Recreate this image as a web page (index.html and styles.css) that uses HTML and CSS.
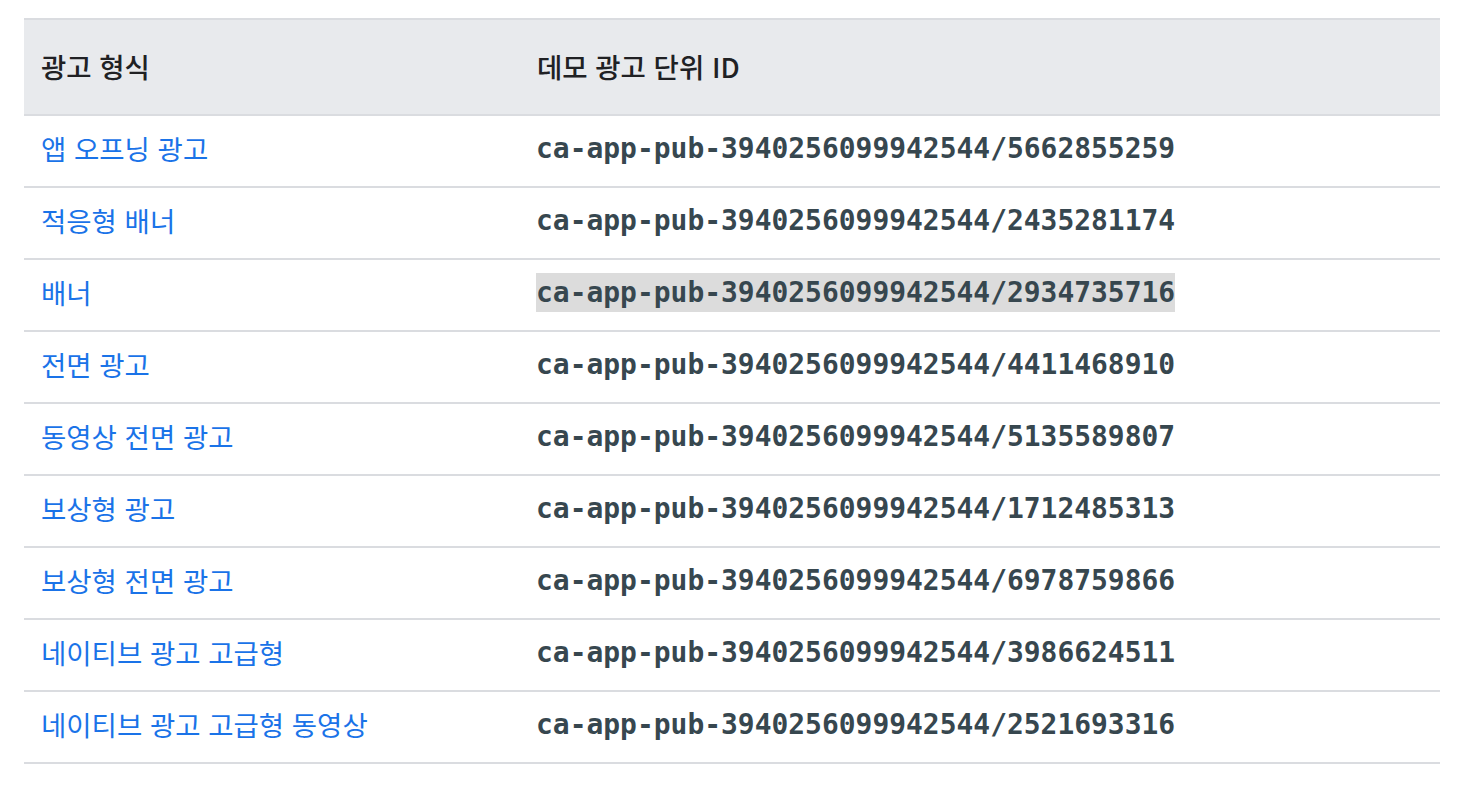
FILE: index.html
```html
<!DOCTYPE html>
<html lang="ko">
<head>
	<meta charset="UTF-8">
	<title>데모 광고 단위</title>
	<link rel="stylesheet" href="styles.css">
</head>
<body>
	<!-- 데모 광고 단위 표 -->
	<div class="wrap">
		<table class="ad-table">
			<thead>
				<tr>
					<th class="col-format">광고 형식</th>
					<th>데모 광고 단위 ID</th>
				</tr>
			</thead>
			<tbody>
				<tr>
					<td><a href="#">앱 오프닝 광고</a></td>
					<td><code>ca-app-pub-3940256099942544/5662855259</code></td>
				</tr>
				<tr>
					<td><a href="#">적응형 배너</a></td>
					<td><code>ca-app-pub-3940256099942544/2435281174</code></td>
				</tr>
				<tr>
					<td><a href="#">배너</a></td>
					<td><code class="selected">ca-app-pub-3940256099942544/2934735716</code></td>
				</tr>
				<tr>
					<td><a href="#">전면 광고</a></td>
					<td><code>ca-app-pub-3940256099942544/4411468910</code></td>
				</tr>
				<tr>
					<td><a href="#">동영상 전면 광고</a></td>
					<td><code>ca-app-pub-3940256099942544/5135589807</code></td>
				</tr>
				<tr>
					<td><a href="#">보상형 광고</a></td>
					<td><code>ca-app-pub-3940256099942544/1712485313</code></td>
				</tr>
				<tr>
					<td><a href="#">보상형 전면 광고</a></td>
					<td><code>ca-app-pub-3940256099942544/6978759866</code></td>
				</tr>
				<tr>
					<td><a href="#">네이티브 광고 고급형</a></td>
					<td><code>ca-app-pub-3940256099942544/3986624511</code></td>
				</tr>
				<tr>
					<td><a href="#">네이티브 광고 고급형 동영상</a></td>
					<td><code>ca-app-pub-3940256099942544/2521693316</code></td>
				</tr>
			</tbody>
		</table>
	</div>
</body>
</html>
```

FILE: styles.css
```css
*{
	padding: 0;
	margin: 0;
	box-sizing: border-box;
}
body{
	background: #fff;
	font-family: "Noto Sans CJK KR", "Noto Sans", sans-serif;
	font-size: 27.5px;
}
/*主容器*/
.wrap{
	padding: 18px 32px 0 24px;
}
.ad-table{
	width: 1416px;
	border-collapse: collapse;
	border-top: 2px solid #dadce0;
}
.ad-table th{
	height: 96px;
	background: #e8eaed;
	border-bottom: 2px solid #dadce0;
	color: #202124;
	font-weight: 500;
	text-align: left;
	padding: 0 17px 2px;
}
.ad-table .col-format{
	width: 496px;
}
.ad-table td{
	height: 72px;
	border-bottom: 2px solid #dadce0;
	padding: 0 17px 6px 17px;
	vertical-align: middle;
}
.ad-table td + td{
	padding-left: 16px;
}
.ad-table a{
	color: #1a73e8;
	text-decoration: none;
}
/*ID 文本*/
.ad-table code{
	font-family: "DejaVu Sans Mono", "Liberation Mono", monospace;
	font-size: 27.95px;
	color: #37474f;
	font-weight: bold;
	vertical-align: 2px;
}
.ad-table code.selected{
	background: #dcdcdc;
	padding: 3px 0;
}
```
